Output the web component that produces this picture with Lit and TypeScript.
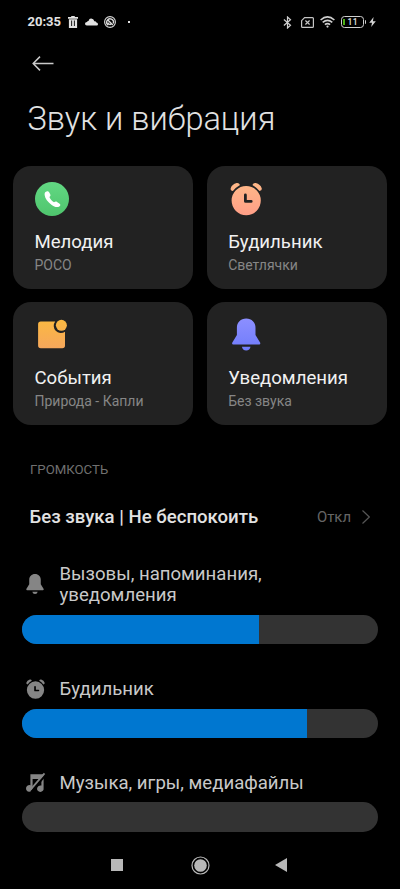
import { LitElement, html, css, svg, nothing } from "lit";
import { customElement, property } from "lit/decorators.js";
import { styleMap } from "lit/directives/style-map.js";

const bell = svg`
  <path d="M14.5 0C8.9 0 5.2 4 5.2 9.2V16.6L.5 24.2Q0 26 1.6 26H27.4Q29 26 28.5 24.2L23.8 16.6V9.2C23.8 4 20.1 0 14.5 0Z"/>
  <path d="M10.2 28.3H18.8Q18.2 32 14.5 32T10.2 28.3Z"/>`;

const clockBody = svg`
  <path fill-rule="evenodd" d="M16 4A14.6 14.6 0 1 1 16 33.2A14.6 14.6 0 1 1 16 4ZM15.2 11.6Q13.8 11.6 13.8 13V19.2Q13.8 20.8 15.4 20.8H21Q22.4 20.8 22.4 19.4T21 18H16.6V13Q16.6 11.6 15.2 11.6Z"/>
  <path d="M.5 6.2Q1.8 2.2 6.4 1Q8.8.5 9.8 3Q5.8 5.2 2.7 9.1Q-.1 8.4.5 6.2Z"/>
  <path d="M31.5 6.2Q30.2 2.2 25.6 1Q23.2.5 22.2 3Q26.2 5.2 29.3 9.1Q32.1 8.4 31.5 6.2Z"/>`;

const tileIcons: Record<string, unknown> = {
  phone: html`<svg width="34" height="34" viewBox="0 0 34 34">
    <defs><linearGradient id="g" x1="0" y1="0" x2="0" y2="1"><stop offset="0" stop-color="#62d883"/><stop offset="1" stop-color="#4fc56d"/></linearGradient></defs>
    <circle cx="17" cy="17" r="17" fill="url(#g)"/>
    <path fill="#fff" d="M10.5 10.1C12 8.7 13.4 9 14.3 10.6L15.3 12.5C15.8 13.6 15.2 14.3 14.4 15.1C15.2 17.2 17 19 19 20.3C20 19.6 21 19.2 22 19.9L24.3 21.5C25.8 22.5 25.6 23.6 24.3 24.5C22 25.7 19.4 25 16.4 22.8C12.8 20 10 16.3 9.7 13.2C9.5 12 9.7 10.8 10.5 10.1Z"/>
  </svg>`,
  alarm: html`<svg width="32" height="34" viewBox="0 0 32 34">
    <defs><linearGradient id="g" gradientUnits="userSpaceOnUse" x1="0" y1="0" x2="0" y2="34"><stop offset="0" stop-color="#ffb988"/><stop offset="1" stop-color="#ff9e87"/></linearGradient></defs>
    <g fill="url(#g)">${clockBody}</g>
  </svg>`,
  event: html`<svg width="30" height="30" viewBox="0 0 30 30">
    <defs><linearGradient id="g" gradientUnits="userSpaceOnUse" x1="0" y1="0" x2="0" y2="29"><stop offset="0" stop-color="#fbb941"/><stop offset="1" stop-color="#f6a75c"/></linearGradient></defs>
    <g fill="url(#g)">
      <path d="M2.8 2H17.2A7.2 7.2 0 0 0 27 12.3V26Q27 28.7 24.3 28.7H2.8Q.1 28.7.1 26V4.7Q.1 2 2.8 2Z"/>
      <circle cx="23.4" cy="5.8" r="5.5"/>
    </g>
  </svg>`,
  bell: html`<svg width="29" height="32" viewBox="0 0 29 32">
    <defs><linearGradient id="g" gradientUnits="userSpaceOnUse" x1="0" y1="0" x2="0" y2="32"><stop offset="0" stop-color="#8c8fff"/><stop offset="1" stop-color="#707cfb"/></linearGradient></defs>
    <g fill="url(#g)">${bell}</g>
  </svg>`,
};

const rowIcons: Record<string, unknown> = {
  bell: html`<svg width="18" height="20" viewBox="0 0 29 32" fill="#858585">${bell}</svg>`,
  alarm: html`<svg width="19" height="19.8" viewBox="0 0 32 33.4" fill="#858585">${clockBody}</svg>`,
  music: html`<svg width="19" height="19" viewBox="0 0 19 19">
    <g fill="#858585"><path d="M4.4 1.2H17.6V15.2A3.3 3.3 0 1 1 15.4 12.6V6H6.6V15.2A3.3 3.3 0 1 1 4.4 12.3Z"/></g>
    <path d="M5.3 19L20 1.2" stroke="#000" stroke-width="2.2"/>
    <path d="M4.8 16.4L18.5.4" stroke="#858585" stroke-width="1.8"/>
  </svg>`,
};

@customElement("sound-tile")
export class SoundTile extends LitElement {
  @property() icon = "";
  @property() label = "";
  @property() value = "";

  static styles = css`
    :host { display: flex; flex-direction: column; box-sizing: border-box; height: 123px; padding: 16px 21.5px 0; border-radius: 18px; background: #222; }
    .icon { display: flex; align-items: center; justify-content: center; width: 34px; height: 34px; }
    .event { transform: translate(1px, -0.5px); }
    .bell { transform: translate(0.7px, -0.5px); }
    .alarm { transform: translate(1.2px, 0); }
    .label { margin-top: 14.5px; font-size: 18.6px; line-height: 24px; color: #f1f1f1; white-space: nowrap; }
    .value { margin-top: 2px; font-size: 14px; line-height: 18px; color: #868686; white-space: nowrap; }
    svg { display: block; overflow: visible; }
  `;

  render() {
    return html`
      <div class="icon ${this.icon}">${tileIcons[this.icon] ?? nothing}</div>
      <div class="label">${this.label}</div>
      <div class="value">${this.value}</div>
    `;
  }
}

@customElement("volume-row")
export class VolumeRow extends LitElement {
  @property() icon = "";
  @property() label = "";
  @property({ type: Number }) level = 0;

  static styles = css`
    :host { display: block; }
    .head { display: flex; align-items: center; padding-left: 3px; }
    .icon { display: flex; justify-content: center; width: 20px; margin: -2px 14.5px 0 0; }
    .label { font-size: 18.6px; line-height: 21.6px; color: #c9c9c9; white-space: pre-line; }
    .track { height: 29.5px; margin-top: 8px; border-radius: 15px; background: #333; overflow: hidden; }
    .fill { height: 100%; background: #0077d0; }
    svg { display: block; overflow: visible; }
  `;

  render() {
    return html`
      <div class="head">
        <div class="icon">${rowIcons[this.icon] ?? nothing}</div>
        <div class="label">${this.label}</div>
      </div>
      <div class="track"><div class="fill" style=${styleMap({ width: `${this.level}%` })}></div></div>
    `;
  }
}

@customElement("app-root")
export class AppRoot extends LitElement {
  static styles = css`
    :host { display: flex; flex-direction: column; box-sizing: border-box; width: 400px; height: 889px; overflow: hidden; background: #000; color: #e2e2e2; font-family: Roboto, "Noto Sans", sans-serif; }
    svg { display: block; flex: none; }
    .status { display: flex; align-items: center; justify-content: space-between; height: 44px; padding: 0 24px 0 27.5px; }
    .group { display: flex; align-items: center; }
    .time { width: 40.5px; font-size: 13px; font-weight: 700; line-height: 16px; }
    .cloud { margin-left: 7px; }
    .app { margin-left: 6px; }
    .dot { width: 2px; height: 2px; margin-left: 11.5px; background: #e2e2e2; }
    .sim { margin-left: 8.5px; }
    .wifi { margin-left: 6px; }
    .battery { display: flex; align-items: center; margin-left: 6px; }
    .cell { display: flex; align-items: center; box-sizing: border-box; width: 23.5px; height: 12px; padding-left: 1.5px; border: 1.4px solid #cfcfcf; border-radius: 3.5px; }
    .charge { width: 2px; height: 6.5px; background: #4bb013; }
    .percent { margin-left: 2.5px; font-size: 8.5px; font-weight: 500; line-height: 9px; letter-spacing: .3px; }
    .cap { width: 1.5px; height: 4px; margin-left: 0.5px; border-radius: 0 1px 1px 0; background: #cfcfcf; }
    .bolt { margin-left: 3px; }
    .back { margin: 12px 0 0 32px; }
    h1 { margin: 27.5px 0 0 27.5px; font-size: 32.5px; font-weight: 300; line-height: 40px; }
    .tiles { display: grid; grid-template-columns: 1fr 1fr; gap: 13.3px; margin: 27px 13px 0; }
    .section { margin: 37px 0 0 30px; font-size: 13.2px; line-height: 16px; color: #707070; }
    .silent { display: flex; align-items: center; margin: 27px 30px 0 29.5px; font-size: 18.6px; line-height: 24px; }
    .name { flex: 1; font-weight: 500; white-space: nowrap; }
    .state { margin-right: 11px; font-size: 14.9px; color: #666; }
    .volumes { display: flex; flex-direction: column; gap: 34.5px; margin: 35px 22px 0; }
    .nav { display: flex; align-items: center; margin-top: auto; height: 48px; padding-left: 111px; }
    .home { margin-left: 67.5px; }
    .prev { margin-left: 65.5px; }
  `;

  render() {
    return html`
      <div class="status">
        <div class="group">
          <div class="time">20:35</div>
          <svg width="10" height="12" viewBox="0 0 10 12" fill="#e2e2e2"><path d="M0 1.1H3.2V0H6.8V1.1H10V2.8H0Z"/><path fill-rule="evenodd" d="M.9 3.2H9.1V12H.9ZM3.2 4.6V10H4.1V4.6ZM5.9 4.6V10H6.8V4.6Z"/></svg>
          <svg class="cloud" width="13" height="8" viewBox="0 0 13 8" fill="#e2e2e2"><path d="M1.8 7.5Q0 7.3 0 5.7T2 4Q2.4 2.8 3.5 2.9Q4.2.6 6 .6Q8.6.5 9.4 3.2Q11.2 3.2 11.4 4.6Q13 4.8 13 6.2T11.5 7.5Z"/></svg>
          <svg class="app" width="12" height="12" viewBox="0 0 12 12" fill="none" stroke="#dadada"><circle cx="6" cy="6" r="5.4" stroke-width="1.1"/><path d="M9.2 7.5A3.4 3.4 0 1 0 4.3 9.1M4.1 6.4A2 2 0 0 0 7 8.2M4.1 4.2L8.8 9" stroke-width="1.4"/></svg>
          <div class="dot"></div>
        </div>
        <div class="group">
          <svg width="9" height="13" viewBox="0 0 9 13" fill="none" stroke="#d0d0d0" stroke-width="1.2"><path d="M.9 3.5L7.5 9.2L4.5 12V1L7.5 3.7L.9 9.5"/></svg>
          <svg class="sim" width="13" height="11" viewBox="0 0 13 11" fill="none" stroke="#c4c4c4" stroke-width="1.2"><path d="M3.6.7H11.5Q12.4.7 12.4 1.6V9.4Q12.4 10.3 11.5 10.3H1.5Q.6 10.3.6 9.4V3.7Z"/><path d="M4.4 3.5L8.6 7.5M8.6 3.5L4.4 7.5"/></svg>
          <svg class="wifi" width="15" height="12" viewBox="0 0 15 12" fill="none" stroke="#cfcfcf" stroke-width="1.6"><path d="M.6 4Q7.5-2.2 14.4 4M2.7 6.4Q7.5 2.2 12.3 6.4M4.9 8.7Q7.5 6.4 10.1 8.7"/><circle cx="7.5" cy="10.6" r="1.1" fill="#cfcfcf" stroke="none"/></svg>
          <div class="battery"><div class="cell"><div class="charge"></div><div class="percent">11</div></div><div class="cap"></div></div>
          <svg class="bolt" width="7" height="12" viewBox="0 0 7 12" fill="#d4d4d4"><path d="M4.6 1L.2 6.8H3L2.2 11L6.8 5.2H3.9Z"/></svg>
        </div>
      </div>
      <svg class="back" width="22" height="15" viewBox="0 0 22 15" fill="none" stroke="#c9c9c9" stroke-width="1.5"><path d="M21.5 7.5H1.2M8 .6L1.2 7.5L8 14.4"/></svg>
      <h1>Звук и вибрация</h1>
      <div class="tiles">
        <sound-tile icon="phone" label="Мелодия" value="POCO"></sound-tile>
        <sound-tile icon="alarm" label="Будильник" value="Светлячки"></sound-tile>
        <sound-tile icon="event" label="События" value="Природа - Капли"></sound-tile>
        <sound-tile icon="bell" label="Уведомления" value="Без звука"></sound-tile>
      </div>
      <div class="section">ГРОМКОСТЬ</div>
      <div class="silent">
        <div class="name">Без звука | Не беспокоить</div>
        <div class="state">Откл</div>
        <svg width="8" height="14" viewBox="0 0 8 14" fill="none" stroke="#555" stroke-width="1.2"><path d="M.5.5L7.3 7L.5 13.5"/></svg>
      </div>
      <div class="volumes">
        <volume-row icon="bell" label=${"Вызовы, напоминания,\nуведомления"} level="66.6"></volume-row>
        <volume-row icon="alarm" label="Будильник" level="80"></volume-row>
        <volume-row icon="music" label="Музыка, игры, медиафайлы" level="0"></volume-row>
      </div>
      <div class="nav">
        <svg width="12" height="12" viewBox="0 0 12 12"><path fill="#b8b8b8" d="M0 0H12V12H0Z"/></svg>
        <svg class="home" width="19" height="19" viewBox="0 0 19 19"><circle cx="9.5" cy="9.5" r="8.5" fill="none" stroke="#b8b8b8" stroke-width="1.2"/><circle cx="9.5" cy="9.5" r="6.3" fill="#b8b8b8"/></svg>
        <svg class="prev" width="12" height="14" viewBox="0 0 12 14"><path fill="#b8b8b8" d="M12 0V14L0 7Z"/></svg>
      </div>
    `;
  }
}
